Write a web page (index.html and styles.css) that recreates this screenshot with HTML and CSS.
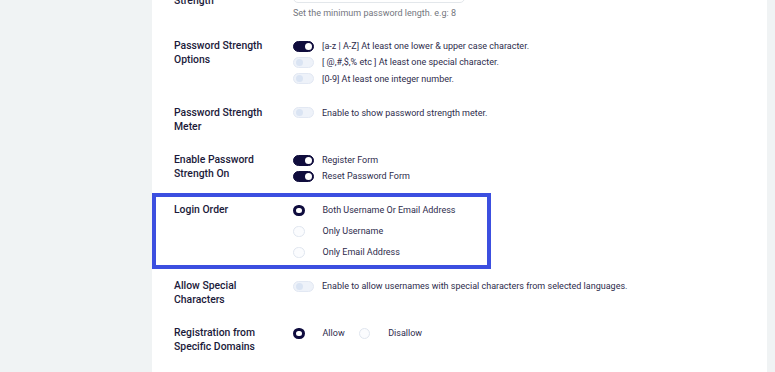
FILE: index.html
```html
<!DOCTYPE html>
<html lang="en">
<head>
<meta charset="utf-8">
<title>Login Settings</title>
<link rel="stylesheet" href="styles.css">
</head>
<body>
<div class="page">
  <aside class="sidebar"></aside>
  <main class="panel">
    <section class="row row-first">
      <div class="label">Minimum Password<br>Strength</div>
      <div class="control">
        <div class="input"></div>
        <p class="help">Set the minimum password length. e.g: 8</p>
      </div>
    </section>

    <section class="row">
      <div class="label">Password Strength<br>Options</div>
      <div class="control">
        <div class="opt opt-tight"><span class="toggle on"></span><span class="text">[a-z | A-Z] At least one lower &amp; upper case character.</span></div>
        <div class="opt opt-tight"><span class="toggle"></span><span class="text">[ @,#,$,% etc ] At least one special character.</span></div>
        <div class="opt opt-tight"><span class="toggle"></span><span class="text">[0-9] At least one integer number.</span></div>
      </div>
    </section>

    <section class="row">
      <div class="label">Password Strength<br>Meter</div>
      <div class="control">
        <div class="opt"><span class="toggle"></span><span class="text">Enable to show password strength meter.</span></div>
      </div>
    </section>

    <section class="row">
      <div class="label">Enable Password<br>Strength On</div>
      <div class="control">
        <div class="opt opt-tight"><span class="toggle on"></span><span class="text">Register Form</span></div>
        <div class="opt opt-tight"><span class="toggle on"></span><span class="text">Reset Password Form</span></div>
      </div>
    </section>

    <section class="row row-highlight">
      <div class="label">Login Order</div>
      <div class="control radios">
        <div class="opt"><span class="radio checked"></span><span class="text rtext">Both Username Or Email Address</span></div>
        <div class="opt"><span class="radio"></span><span class="text rtext">Only Username</span></div>
        <div class="opt"><span class="radio"></span><span class="text rtext">Only Email Address</span></div>
      </div>
    </section>

    <section class="row">
      <div class="label">Allow Special<br>Characters</div>
      <div class="control">
        <div class="opt"><span class="toggle"></span><span class="text">Enable to allow usernames with special characters from selected languages.</span></div>
      </div>
    </section>

    <section class="row">
      <div class="label">Registration from<br>Specific Domains</div>
      <div class="control">
        <div class="opt inline">
          <span class="radio checked"></span><span class="text rtext">Allow</span>
          <span class="radio second"></span><span class="text rtext">Disallow</span>
        </div>
      </div>
    </section>
  </main>
  <div class="gutter"></div>
</div>
</body>
</html>
```
FILE: styles.css
```css
* { box-sizing: border-box; }

html, body {
  margin: 0;
  padding: 0;
}

body {
  font-family: Roboto, "Liberation Sans", Arial, sans-serif;
  color: #1d1b3c;
  background: #f0f3f4;
}

.page {
  display: flex;
  height: 372px;
  overflow: hidden;
}

.sidebar {
  width: 152px;
  flex: none;
  background: #f0f3f4;
}

.panel {
  flex: 1;
  background: #ffffff;
  overflow: hidden;
}

.gutter {
  width: 8px;
  flex: none;
  background: #f0f3f4;
}

.row {
  display: grid;
  grid-template-columns: 119px 1fr;
  padding: 9px 0 9px 22px;
}

.row-first {
  margin-top: -30px;
}

.row-highlight {
  width: 339px;
  box-shadow: inset 0 0 0 4px #3c4fe0;
}

.label {
  padding-top: 1px;
  font-size: 10.4px;
  line-height: 14px;
  font-weight: 500;
  color: #1b1a3a;
}

.control {
  display: flex;
  flex-direction: column;
}

.input {
  width: 172px;
  height: 24px;
  border: 1px solid #e3e7eb;
  border-radius: 5px;
  background: #fff;
}

.help {
  margin: 4px 0 1px;
  font-size: 9px;
  line-height: 12px;
  color: #74767e;
}

.opt {
  display: flex;
  align-items: center;
  height: 16px;
}

.opt-tight {
  height: 16.3px;
}

.radios {
  gap: 5px;
}

.text {
  font-size: 9px;
  color: #2d2b4b;
  white-space: nowrap;
}

.toggle {
  position: relative;
  flex: none;
  width: 21px;
  height: 11px;
  border-radius: 6px;
  background: #eef2f9;
  border: 1px solid #e2e8f3;
  margin-right: 8px;
}

.toggle::after {
  content: "";
  position: absolute;
  top: 1px;
  left: 2px;
  width: 7px;
  height: 7px;
  border-radius: 50%;
  background: #dae4f3;
}

.toggle.on {
  background: #100d3d;
  border-color: #100d3d;
}

.toggle.on::after {
  left: auto;
  right: 1px;
  background: #ffffff;
}

.radio {
  flex: none;
  width: 11.5px;
  height: 11.5px;
  border-radius: 50%;
  background: #fbfcfe;
  border: 1px solid #e0e6ef;
  margin-right: 18px;
}

.radio.checked {
  background: #ffffff;
  border: 3.2px solid #0f0c3e;
}

.radio.second {
  margin-left: 14px;
}
```
